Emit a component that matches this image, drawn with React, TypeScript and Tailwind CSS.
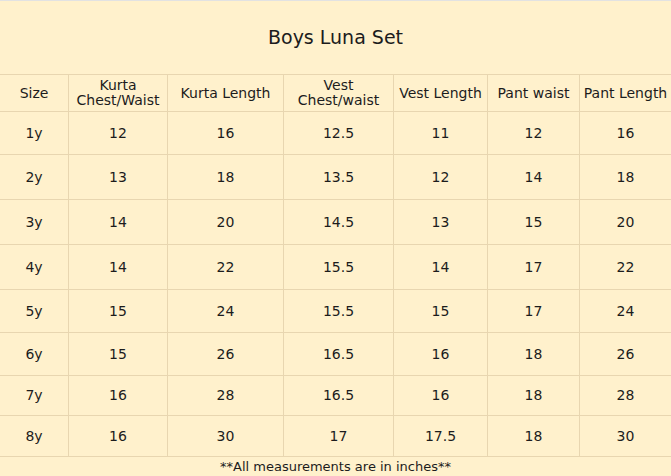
import React from "react";

const rows: { cells: string[]; h: string }[] = [
  { cells: ["1y", "12", "16", "12.5", "11", "12", "16"], h: "h-[43px]" },
  { cells: ["2y", "13", "18", "13.5", "12", "14", "18"], h: "h-[45px]" },
  { cells: ["3y", "14", "20", "14.5", "13", "15", "20"], h: "h-[45px]" },
  { cells: ["4y", "14", "22", "15.5", "14", "17", "22"], h: "h-[45px]" },
  { cells: ["5y", "15", "24", "15.5", "15", "17", "24"], h: "h-[43px]" },
  { cells: ["6y", "15", "26", "16.5", "16", "18", "26"], h: "h-[43px]" },
  { cells: ["7y", "16", "28", "16.5", "16", "18", "28"], h: "h-[40px]" },
  { cells: ["8y", "16", "30", "17", "17.5", "18", "30"], h: "h-[41px]" },
];

const headers: React.ReactNode[] = [
  "Size",
  <>Kurta<br />Chest/Waist</>,
  "Kurta Length",
  <>Vest<br />Chest/waist</>,
  "Vest Length",
  "Pant waist",
  "Pant Length",
];

const grid = "grid grid-cols-[68px_99px_116px_110px_94px_92px_92px]";

export default function App() {
  return (
    <div
      className="w-[671px] h-[476px] overflow-hidden bg-[#fff1cc] text-[#1c1c1c] border-t border-[#e2e2e2]"
      style={{ fontFamily: '"DejaVu Sans", "Noto Sans", sans-serif' }}
    >
      <div className="h-[73px] flex items-center justify-center text-[19px]">
        Boys Luna Set
      </div>
      <div className={`${grid} h-[37px] border-t border-[#e8d6b0] text-[14px] leading-[15px]`}>
        {headers.map((h, i) => (
          <div
            key={i}
            className={`flex items-center justify-center text-center ${i > 0 ? "border-l border-[#e8d6b0]" : ""}`}
          >
            <span>{h}</span>
          </div>
        ))}
      </div>
      {rows.map((r, ri) => (
        <div key={ri} className={`${grid} ${r.h} border-t border-[#e8d6b0] text-[14px]`}>
          {r.cells.map((c, i) => (
            <div
              key={i}
              className={`flex items-center justify-center ${i > 0 ? "border-l border-[#e8d6b0]" : ""}`}
            >
              {c}
            </div>
          ))}
        </div>
      ))}
      <div className="h-[20px] border-t border-[#e8d6b0] flex items-center justify-center text-[13px]">
        **All measurements are in inches**
      </div>
    </div>
  );
}
